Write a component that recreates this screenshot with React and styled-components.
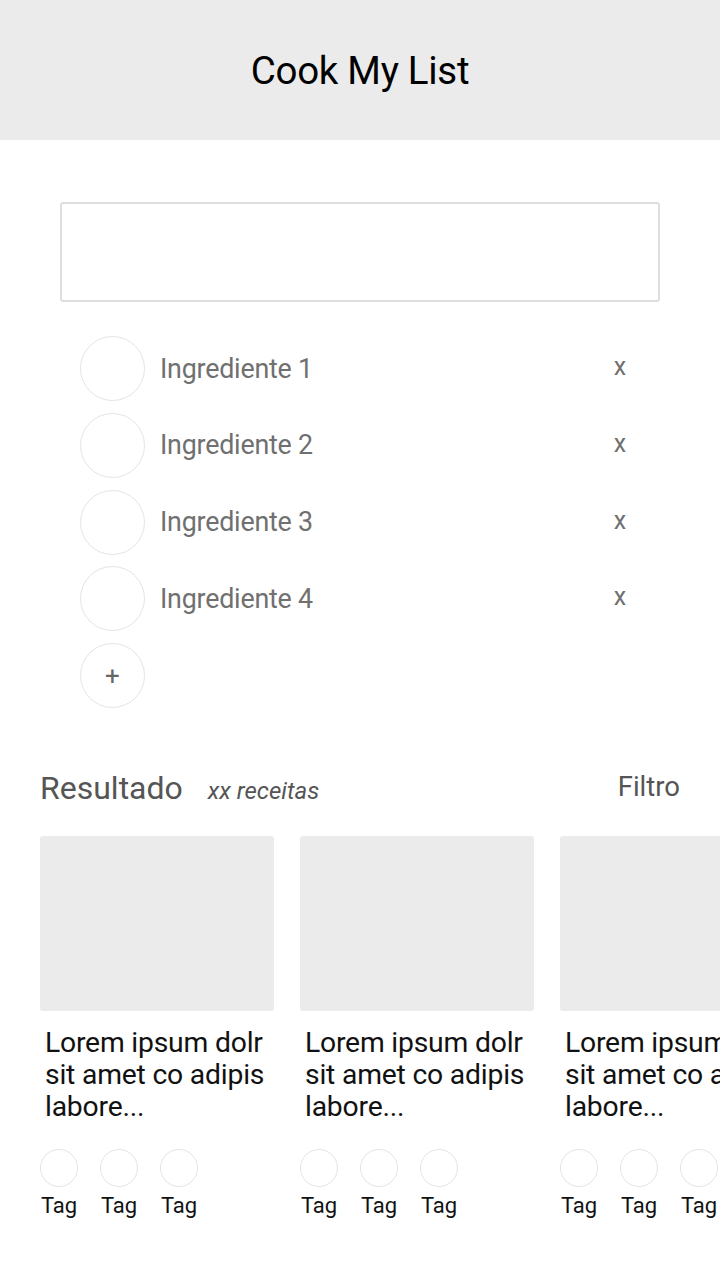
import React from "react";
import styled, { createGlobalStyle } from "styled-components";

const GlobalStyle = createGlobalStyle`
  html, body {
    margin: 0;
    padding: 0;
    background: #ffffff;
    font-family: "Roboto", "Liberation Sans", sans-serif;
  }
`;

const Page = styled.div`
  width: 720px;
  min-height: 1280px;
  background: #ffffff;
  overflow: hidden;
`;

const Header = styled.header`
  height: 140px;
  background-color: #ebebeb;
  display: flex;
  align-items: center;
  justify-content: center;
`;

const Title = styled.h1`
  margin: 0;
  font-size: 38.5px;
  font-weight: 400;
  color: #000;
  letter-spacing: -0.3px;
`;

const SearchBox = styled.div`
  margin: 62px 60px 0 60px;
  height: 96px;
  border: 2px solid #dedede;
  border-radius: 3px;
`;

const IngredientList = styled.ul`
  list-style: none;
  margin: 34px 0 0 0;
  padding: 0 80px;
  display: flex;
  flex-direction: column;
  gap: 11.75px;
`;

const IngredientRow = styled.li`
  display: flex;
  align-items: center;
  height: 65px;
`;

const Circle = styled.div`
  width: ${(p) => p.size}px;
  height: ${(p) => p.size}px;
  flex-shrink: 0;
  border: 1px solid #e4e4e4;
  border-radius: 50%;
  box-sizing: border-box;
  display: flex;
  align-items: center;
  justify-content: center;
  color: #666;
  font-size: 26px;
`;

const IngredientName = styled.span`
  flex: 1;
  margin-left: 15px;
  font-size: 26.8px;
  color: #707070;
  letter-spacing: -0.2px;
`;

const Remove = styled.span`
  width: 40px;
  font-size: 25px;
  color: #707070;
  margin-top: -4px;
  text-align: center;
`;

const ResultHeader = styled.div`
  display: flex;
  align-items: baseline;
  margin-top: 61px;
  padding: 0 40px;
`;

const ResultTitle = styled.h2`
  margin: 0;
  font-size: 32px;
  font-weight: 400;
  color: #555;
`;

const Count = styled.span`
  margin-left: 25px;
  font-size: 24px;
  font-style: italic;
  color: #555;
`;

const Filter = styled.span`
  margin-left: auto;
  font-size: 27.5px;
  color: #555;
  position: relative;
  top: -3px;
`;

const CardRow = styled.div`
  display: flex;
  gap: 26px;
  padding-left: 40px;
  margin-top: 29px;
  overflow: hidden;
`;

const Card = styled.div`
  width: 234px;
  flex-shrink: 0;
`;

const CardImage = styled.div`
  height: 175px;
  background-color: #ebebeb;
  border-radius: 3px;
`;

const CardText = styled.p`
  margin: 16px 0 0 5px;
  font-size: 28.3px;
  line-height: 32px;
  color: #111;
  white-space: nowrap;
  letter-spacing: -0.2px;
`;

const Tags = styled.div`
  display: flex;
  gap: 22px;
  margin-top: 26px;
`;

const Tag = styled.div`
  display: flex;
  flex-direction: column;
  align-items: center;
  width: 38px;
`;

const TagLabel = styled.span`
  margin-top: 6px;
  font-size: 22px;
  color: #111;
`;

const ingredients = ["Ingrediente 1", "Ingrediente 2", "Ingrediente 3", "Ingrediente 4"];
const recipes = [1, 2, 3];

export default function App() {
  return (
    <Page>
      <GlobalStyle />
      <Header>
        <Title>Cook My List</Title>
      </Header>
      <SearchBox />
      <IngredientList>
        {ingredients.map((name) => (
          <IngredientRow key={name}>
            <Circle size={65} />
            <IngredientName>{name}</IngredientName>
            <Remove>x</Remove>
          </IngredientRow>
        ))}
        <IngredientRow>
          <Circle size={65}>+</Circle>
        </IngredientRow>
      </IngredientList>
      <ResultHeader>
        <ResultTitle>Resultado</ResultTitle>
        <Count>xx receitas</Count>
        <Filter>Filtro</Filter>
      </ResultHeader>
      <CardRow>
        {recipes.map((id) => (
          <Card key={id}>
            <CardImage />
            <CardText>
              Lorem ipsum dolr
              <br />
              sit amet co adipis
              <br />
              labore...
            </CardText>
            <Tags>
              {[1, 2, 3].map((t) => (
                <Tag key={t}>
                  <Circle size={38} />
                  <TagLabel>Tag</TagLabel>
                </Tag>
              ))}
            </Tags>
          </Card>
        ))}
      </CardRow>
    </Page>
  );
}
